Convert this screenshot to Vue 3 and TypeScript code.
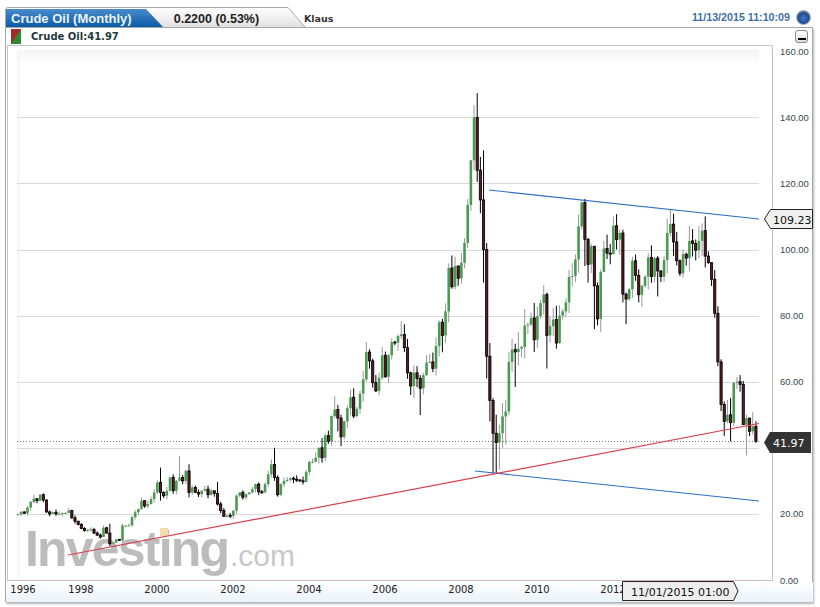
<script setup lang="ts">
import { computed } from "vue";

interface Candle {
  x: number;
  up: boolean;
  top: number;
  height: number;
  high: number;
  low: number;
}

// monthly closes read off the chart, first bar mid 1996
const closes: number[] = [
  19.9, 20.6, 20.2, 21.9, 23.6, 24.6, 24.0, 25.8, 24.2, 20.6,
  20.0, 20.5, 20.0, 20.0, 20.3, 20.3, 21.0, 18.8, 17.8, 16.8,
  15.6, 15.0, 15.2, 15.3, 14.2, 13.6, 13.0, 15.8, 14.2, 11.0,
  11.3, 12.3, 12.0, 16.5, 16.5, 16.5, 19.0, 20.5, 21.5, 24.0,
  22.4, 23.0, 24.5, 26.5, 29.5, 26.5, 25.5, 27.0, 31.0, 27.0,
  30.0, 31.0, 30.0, 33.0, 26.5, 28.0, 26.5, 26.0, 27.0, 27.5,
  25.8, 27.0, 26.2, 23.0, 21.0, 19.2, 19.5, 19.4, 21.0, 25.5,
  26.5, 25.0, 26.0, 26.5, 27.5, 29.0, 26.7, 26.5, 29.0, 32.0,
  35.0, 31.0, 25.8, 29.0, 30.0, 30.3, 30.8, 30.5, 30.3, 30.0,
  29.7, 32.7, 35.7, 35.8, 37.0, 40.0, 37.0, 43.7, 42.0, 49.6,
  51.6, 49.0, 43.3, 48.0, 52.0, 55.3, 49.6, 51.8, 56.4, 60.7,
  69.0, 66.3, 59.7, 57.2, 61.2, 68.0, 61.5, 68.0, 72.0, 71.8,
  73.8, 74.3, 70.3, 62.7, 58.7, 62.7, 61.0, 58.0, 62.0, 65.8,
  66.0, 64.0, 70.8, 78.0, 74.0, 81.3, 94.4, 88.7, 95.0, 91.3,
  96.0, 102.0, 113.5, 127.0, 140.0, 124.0, 115.0, 100.0, 67.7, 54.3,
  44.4, 41.6, 44.4, 49.5, 51.0, 66.0, 69.7, 69.0, 70.0, 70.5,
  77.0, 77.3, 79.3, 72.7, 79.8, 83.8, 86.4, 74.0, 76.8, 78.8,
  71.7, 80.0, 81.3, 84.0, 91.7, 92.0, 97.0, 107.0, 114.2, 103.1,
  95.5, 101.0, 89.0, 79.0, 93.2, 100.3, 98.9, 98.6, 107.2, 103.0,
  105.0, 86.5, 85.0, 88.0, 96.6, 92.2, 86.3, 89.0, 91.8, 97.6,
  91.8, 97.4, 93.5, 91.8, 96.8, 105.0, 107.7, 102.3, 96.6, 92.8,
  98.6, 97.4, 102.6, 101.8, 99.8, 102.6, 105.7, 98.0, 96.0, 91.0,
  80.7, 66.0, 53.1, 48.0, 50.0, 47.6, 59.7, 60.0, 59.2, 47.0,
  49.0, 45.0, 46.5, 41.97,
];

// wicks that stand out, index -> [high, low]
const wicks: Record<number, [number, number]> = {
  29: [17, 10.3], 45: [34, 24], 51: [37.5, 30], 54: [35, 25], 63: [29.7, 22.5],
  81: [40, 30], 96: [43, 35.5], 100: [55.6, 49], 101: [53, 45], 102: [50, 40.5],
  106: [58, 49], 110: [72, 60], 121: [78.4, 73], 122: [77.4, 69], 124: [63, 56],
  125: [65, 55], 127: [62, 49.9], 134: [79, 68.9], 144: [143.7, 124], 145: [147.3, 120.5],
  146: [128, 111], 147: [130, 90], 148: [102, 61], 149: [71.7, 48], 150: [55, 32.3],
  151: [50, 32.3], 152: [47, 33.4], 153: [53.5, 40], 154: [54.5, 41], 156: [73, 63],
  157: [71.5, 58.4], 158: [75, 65], 160: [82, 67], 163: [83.8, 69], 167: [87, 64],
  170: [83, 70], 178: [114.8, 106], 179: [115.3, 95], 180: [103.5, 90], 182: [96.6, 75.9],
  183: [90, 77], 184: [94, 75], 188: [110, 103], 189: [110.7, 100], 191: [106, 84],
  192: [87, 77.4], 196: [94, 84], 202: [98, 85.8], 206: [112.2, 104], 207: [110.8, 98],
  209: [97, 92], 210: [100, 91.5], 216: [107.9, 98], 223: [54, 43.6], 224: [54.5, 47.5],
  225: [55, 42], 228: [62, 57], 230: [50, 37.7], 231: [49, 43.5], 232: [50.8, 44],
  233: [48, 41.5],
};

const priceY = (p: number) => 580 - p * 3.305;

const candles = computed<Candle[]>(() => {
  let seed = 11;
  const rnd = () => {
    seed = (seed * 75 + 74) % 65537;
    return seed / 65537;
  };
  return closes.map((close, i) => {
    const open = i ? closes[i - 1] : 19.6;
    const a = rnd();
    const b = rnd();
    const hi = wicks[i]?.[0] ?? Math.max(open, close) + close * 0.045 * a;
    const lo = wicks[i]?.[1] ?? Math.min(open, close) - close * 0.045 * b;
    const top = priceY(Math.max(open, close));
    return {
      x: 18 + 3.167 * i,
      up: close >= open,
      top,
      height: Math.max(priceY(Math.min(open, close)) - top, 1),
      high: priceY(hi),
      low: priceY(lo),
    };
  });
});

// the 40.00 label sits under the dark last-price tag
const yLabels = [160, 140, 120, 100, 80, 60, 20, 0];
const gridLines = [140, 120, 100, 80, 60, 40, 20];
const xLabels = [
  { year: "1996", x: 23 },
  { year: "1998", x: 81 },
  { year: "2000", x: 157 },
  { year: "2002", x: 233 },
  { year: "2004", x: 309 },
  { year: "2006", x: 385 },
  { year: "2008", x: 461 },
  { year: "2010", x: 537 },
  { year: "2012", x: 613 },
];
</script>

<template>
  <div class="page">
    <header class="head">
      <div class="tab">
        <svg class="tab-bg" width="302" height="21" viewBox="0 0 302 21">
          <defs>
            <linearGradient id="tabGrey" x1="0" y1="0" x2="0" y2="1">
              <stop offset="0" stop-color="#ffffff" />
              <stop offset="1" stop-color="#e2e2e2" />
            </linearGradient>
            <linearGradient id="tabBlue" x1="0" y1="0" x2="0" y2="1">
              <stop offset="0" stop-color="#4a8ccb" />
              <stop offset="1" stop-color="#0b5aa6" />
            </linearGradient>
          </defs>
          <path d="M0.5 20V3Q0.5 0.5 3 0.5H283L300 20" fill="url(#tabGrey)" stroke="#a8a8a8" />
          <path d="M1 2H141L158 20H1Z" fill="url(#tabBlue)" />
        </svg>
        <span class="tab-title">Crude Oil (Monthly)</span>
        <span class="tab-value">0.2200 (0.53%)</span>
      </div>
      <span class="user">Klaus</span>
      <span class="clock">11/13/2015 11:10:09</span>
      <span class="globe"></span>
    </header>

    <section class="panel">
      <div class="legend">
        <svg class="legend-icon" width="10" height="15" viewBox="0 0 10 15">
          <rect width="10" height="15" fill="#2f8a36" />
          <path d="M0 0H10L0 15Z" fill="#a52a2a" />
        </svg>
        <span>Crude Oil:41.97</span>
        <button class="minimize" type="button"><i></i></button>
      </div>

      <svg class="chart" width="807" height="557" viewBox="6 45 807 557">
        <defs>
          <linearGradient id="fadeTop" x1="0" y1="0" x2="0" y2="1">
            <stop offset="0" stop-color="#f3f3f3" />
            <stop offset="1" stop-color="#ffffff" />
          </linearGradient>
          <linearGradient id="fadeLeft" x1="0" y1="0" x2="1" y2="0">
            <stop offset="0" stop-color="#f5f5f5" />
            <stop offset="1" stop-color="#ffffff" stop-opacity="0" />
          </linearGradient>
          <linearGradient id="fadeAxis" x1="0" y1="0" x2="0" y2="1">
            <stop offset="0" stop-color="#ffffff" />
            <stop offset="1" stop-color="#e9f2fa" />
          </linearGradient>
        </defs>

        <rect x="6" y="582" width="807" height="20" fill="url(#fadeAxis)" />
        <rect x="7.5" y="45.5" width="765" height="535" fill="#fff" stroke="#c4c4c4" />
        <rect x="17" y="50" width="742" height="14" fill="url(#fadeTop)" />
        <rect x="17" y="50" width="9" height="530" fill="url(#fadeLeft)" />

        <text class="mark" x="25" y="566">Investing</text>
        <rect x="160" y="528" width="8" height="8" fill="#f6dcae" />
        <text class="mark-com" x="230" y="566">.com</text>

        <line
          v-for="p in gridLines"
          :key="p"
          x1="17"
          x2="759"
          :y1="Math.round(priceY(p)) + 0.5"
          :y2="Math.round(priceY(p)) + 0.5"
          stroke="#dadada"
        />
        <line x1="17" x2="759" y1="580.5" y2="580.5" stroke="#e3aaaa" stroke-dasharray="1 1" />
        <line x1="17" x2="760" y1="441.5" y2="441.5" stroke="#777" stroke-dasharray="1 2" />

        <g v-for="(c, i) in candles" :key="i">
          <line
            :x1="c.x"
            :x2="c.x"
            :y1="c.high"
            :y2="c.low"
            :stroke="c.up ? '#999' : '#000'"
            stroke-width="1"
          />
          <rect
            v-if="c.up"
            :x="c.x - 1.3"
            :y="c.top"
            width="2.6"
            :height="c.height"
            fill="#4a9a52"
          />
          <rect
            v-else
            :x="c.x - 1.1"
            :y="c.top"
            width="2.2"
            :height="c.height"
            fill="#5a1c1c"
            stroke="#000"
            stroke-width="0.8"
          />
        </g>

        <line x1="489" y1="190" x2="759" y2="219" stroke="#2f6fc4" stroke-width="1.2" />
        <line x1="475" y1="471" x2="759" y2="501" stroke="#2f6fc4" stroke-width="1.2" />
        <line x1="68" y1="555" x2="759" y2="423.5" stroke="#d8404a" stroke-width="1.2" />

        <text v-for="p in yLabels" :key="p" class="y-label" x="780" :y="priceY(p) + 3.5">
          {{ p.toFixed(2) }}
        </text>
        <text v-for="l in xLabels" :key="l.year" class="x-label" :x="l.x" y="593">{{ l.year }}</text>

        <path d="M770.5 209.5H812.5V228.5H770.5L764.5 219Z" fill="#f0f0f0" stroke="#222" />
        <text class="tag" x="773" y="223.5">109.23</text>
        <path d="M770 432H811V453H770L764 442.5Z" fill="#333" />
        <text class="tag tag-dark" x="773" y="447">41.97</text>
        <path d="M622.5 581.5H733.5L738 591L733.5 600.5H622.5Z" fill="#eee" stroke="#222" />
        <text class="tag" x="631" y="595.5">11/01/2015 01:00</text>
      </svg>
    </section>
  </div>
</template>

<style>
html,
body {
  background: #fff;
}
</style>

<style scoped>
.page {
  width: 820px;
  height: 607px;
  overflow: hidden;
  font-family: "Liberation Sans", Arial, sans-serif;
  background: #fff;
}

.head {
  display: flex;
  align-items: center;
  height: 20px;
  padding: 7px 0 0 5px;
}

.tab {
  position: relative;
  display: flex;
  align-items: center;
  width: 299px;
  height: 20px;
  flex: none;
}

.tab-bg {
  position: absolute;
  left: 0;
  top: 0;
}

.tab-title {
  position: relative;
  width: 163px;
  padding-left: 6px;
  box-sizing: border-box;
  color: #eaf2fa;
  font-size: 13px;
  font-weight: 700;
  padding-top: 2px;
}

.tab-value {
  position: relative;
  padding-left: 6px;
  color: #222;
  font-size: 13px;
  font-weight: 700;
  transform: scaleX(0.96);
  transform-origin: left;
  padding-top: 2px;
}

.user {
  font-family: "DejaVu Sans", sans-serif;
  font-size: 9.5px;
  font-weight: 700;
  color: #333;
  padding-top: 2px;
}

.clock {
  margin-left: auto;
  color: #3f6fa6;
  font-size: 10.7px;
  font-weight: 700;
}

.globe {
  width: 13px;
  height: 13px;
  margin: 0 9px 0 6px;
  border-radius: 50%;
  background: radial-gradient(circle at 50% 55%, #3e78c4 0, #1f4f96 55%, #6b7f98 72%, #e6e6e6 100%);
  border: 1px solid #a5a5a5;
}

.panel {
  width: 808px;
  height: 575px;
  margin-left: 5px;
  box-sizing: border-box;
  border: 1px solid #a8a8a8;
  box-shadow: 1px 2px 2px #b5b5b5;
  background: #fff;
}

.legend {
  display: flex;
  align-items: center;
  gap: 10px;
  height: 17px;
  padding-left: 5px;
  color: #1f3b40;
  font-family: "DejaVu Sans", sans-serif;
  font-size: 10px;
  font-weight: 700;
}

.legend-icon {
  flex: none;
}

.minimize {
  width: 13px;
  height: 13px;
  margin-left: auto;
  margin-right: 4px;
  padding: 0;
  display: flex;
  align-items: flex-end;
  justify-content: center;
  border: 1px solid #8a8a8a;
  border-radius: 3px;
  background: linear-gradient(#fff, #ddd);
}

.minimize i {
  display: block;
  width: 8px;
  height: 2px;
  margin-bottom: 2px;
  background: #000;
}

.chart {
  display: block;
  overflow: visible;
}

.mark {
  font-family: "Liberation Sans", Arial, sans-serif;
  font-size: 50px;
  font-weight: 700;
  letter-spacing: -1.8px;
  fill: #bcbcbc;
}

.mark-com {
  font-family: "Liberation Sans", Arial, sans-serif;
  font-size: 30px;
  fill: #c8c8c8;
}

.y-label {
  font-family: "Liberation Sans", Arial, sans-serif;
  font-size: 9.4px;
  fill: #33494f;
}

.x-label {
  font-family: "DejaVu Sans", sans-serif;
  font-size: 10px;
  text-anchor: middle;
  fill: #222;
}

.tag {
  font-family: "DejaVu Sans", sans-serif;
  font-size: 11px;
  fill: #111;
}

.tag-dark {
  fill: #fff;
}
</style>
